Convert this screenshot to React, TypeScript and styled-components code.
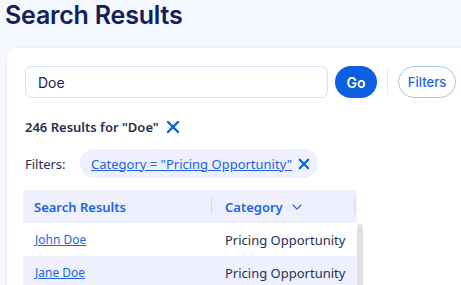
import styled, { createGlobalStyle } from "styled-components";

const GlobalStyle = createGlobalStyle`
  body {
    margin: 0;
    background: #f4f7fe;
    font-family: "Noto Sans", "Open Sans", sans-serif;
    overflow: hidden;
  }
`;

type Row = {
  name: string;
  category: string;
};

const rows: Row[] = [
  { name: "John Doe", category: "Pricing Opportunity" },
  { name: "Jane Doe", category: "Pricing Opportunity" },
];

function CloseIcon({ size = 13 }: { size?: number }) {
  return (
    <svg width={size} height={size} viewBox="0 0 14 14" fill="none">
      <path d="M2 2 L12 12 M12 2 L2 12" stroke="#0b5fe0" strokeWidth="2.4" strokeLinecap="round" />
    </svg>
  );
}

function ChevronDown() {
  return (
    <svg width="10" height="6" viewBox="0 0 10 6" fill="none">
      <path d="M1 1 L5 5 L9 1" stroke="#1d63e8" strokeWidth="1.1" strokeLinecap="round" strokeLinejoin="round" />
    </svg>
  );
}

export default function App() {
  return (
    <>
      <GlobalStyle />
      <Page>
        <Title>Search Results</Title>
        <Card>
          <SearchRow>
            <SearchInput defaultValue="Doe" />
            <GoButton>Go</GoButton>
            <Divider />
            <FiltersButton>Filters</FiltersButton>
          </SearchRow>

          <ResultsLine>
            246 Results for "Doe"
            <IconButton aria-label="Clear search">
              <CloseIcon size={14} />
            </IconButton>
          </ResultsLine>

          <FilterRow>
            <FilterLabel>Filters:</FilterLabel>
            <Chip>
              <ChipLink href="#">Category = "Pricing Opportunity"</ChipLink>
              <IconButton aria-label="Remove filter">
                <CloseIcon size={12} />
              </IconButton>
            </Chip>
          </FilterRow>

          <TableWrap>
            <Table>
              <HeaderRow>
                <HeaderCell $width={189}>Search Results</HeaderCell>
                <HeaderCell $width={143}>
                  Category <ChevronDown />
                </HeaderCell>
              </HeaderRow>
              {rows.map((row, i) => (
                <BodyRow key={row.name} $striped={i % 2 === 1}>
                  <BodyCell $width={189}>
                    <NameLink href="#">{row.name}</NameLink>
                  </BodyCell>
                  <BodyCell $width={143}>{row.category}</BodyCell>
                </BodyRow>
              ))}
            </Table>
            <Scrollbar />
          </TableWrap>
        </Card>
      </Page>
    </>
  );
}

const Page = styled.div`
  height: 285px;
  overflow: hidden;
`;

const Title = styled.h1`
  margin: 0;
  padding: 0 5px;
  font-family: Inter, "Noto Sans", sans-serif;
  font-size: 25px;
  line-height: 30px;
  font-weight: 600;
  color: #12205a;
  letter-spacing: -0.2px;
`;

const Card = styled.div`
  margin: 17px 0 0 6px;
  width: 480px;
  background: #ffffff;
  border: 1px solid #ecf0fb;
  border-radius: 10px;
  padding: 18px 18px 0;
  min-height: 300px;
`;

const SearchRow = styled.div`
  display: flex;
  align-items: center;
  gap: 7px;
`;

const SearchInput = styled.input`
  box-sizing: border-box;
  width: 303px;
  height: 32px;
  border: 1px solid #d8e3f4;
  border-radius: 6px;
  padding: 0 12px;
  font-family: Inter, "Noto Sans", sans-serif;
  font-size: 14px;
  color: #1d2550;
  outline: none;
`;

const GoButton = styled.button`
  width: 42px;
  height: 32px;
  border: none;
  border-radius: 16px;
  background: #0b5fe0;
  color: #ffffff;
  font-family: Inter, "Noto Sans", sans-serif;
  font-size: 14px;
  font-weight: 600;
  padding: 0;
`;

const Divider = styled.div`
  width: 1px;
  height: 26px;
  background: #e3e7ef;
  margin: 0 3px;
`;

const FiltersButton = styled.button`
  box-sizing: border-box;
  width: 58px;
  height: 32px;
  border: 1px solid #a9c4f2;
  border-radius: 16px;
  background: #ffffff;
  color: #1d63e8;
  font-family: Inter, "Noto Sans", sans-serif;
  font-size: 13px;
  font-weight: 500;
  padding: 0;
`;

const ResultsLine = styled.div`
  display: flex;
  align-items: center;
  gap: 7px;
  margin-top: 20px;
  font-size: 13px;
  line-height: 18px;
  font-weight: 600;
  color: #27304f;
`;

const IconButton = styled.button`
  display: inline-flex;
  align-items: center;
  justify-content: center;
  border: none;
  background: transparent;
  padding: 0;
  cursor: pointer;
`;

const FilterRow = styled.div`
  display: flex;
  align-items: center;
  margin-top: 13px;
`;

const FilterLabel = styled.span`
  width: 55px;
  font-size: 13px;
  color: #27304f;
`;

const Chip = styled.div`
  display: flex;
  align-items: center;
  gap: 6px;
  height: 29px;
  padding: 0 8px 0 11px;
  background: #eef1fd;
  border-radius: 15px;
`;

const ChipLink = styled.a`
  font-size: 13px;
  color: #1d63e8;
  text-decoration: underline;
`;

const TableWrap = styled.div`
  display: flex;
  margin: 12px 0 0 -2px;
`;

const Table = styled.div`
  width: 334px;
`;

const HeaderRow = styled.div`
  display: flex;
  height: 33px;
  background: #eef1fd;
`;

const HeaderCell = styled.div<{ $width: number }>`
  position: relative;
  box-sizing: border-box;
  width: ${(p) => p.$width}px;
  display: flex;
  align-items: center;
  gap: 9px;
  padding-left: 11px;
  font-size: 13px;
  font-weight: 600;
  color: #1d63e8;
  &::after {
    content: "";
    position: absolute;
    right: 0;
    top: 8px;
    width: 1px;
    height: 16px;
    background: #d5d9e6;
  }
  & + & {
    padding-left: 13px;
  }
`;

const BodyRow = styled.div<{ $striped: boolean }>`
  display: flex;
  height: 33px;
  background: ${(p) => (p.$striped ? "#eef1fd" : "#ffffff")};
`;

const BodyCell = styled.div<{ $width: number }>`
  box-sizing: border-box;
  width: ${(p) => p.$width}px;
  display: flex;
  align-items: center;
  padding-left: 12px;
  font-size: 13px;
  color: #27304f;
  & + & {
    padding-left: 13px;
  }
`;

const NameLink = styled.a`
  font-size: 12px;
  color: #1d63e8;
  text-decoration: underline;
`;

const Scrollbar = styled.div`
  width: 6px;
  height: 80px;
  margin-top: 34px;
  background: #e1e1e1;
  border-radius: 3px 3px 0 0;
`;
